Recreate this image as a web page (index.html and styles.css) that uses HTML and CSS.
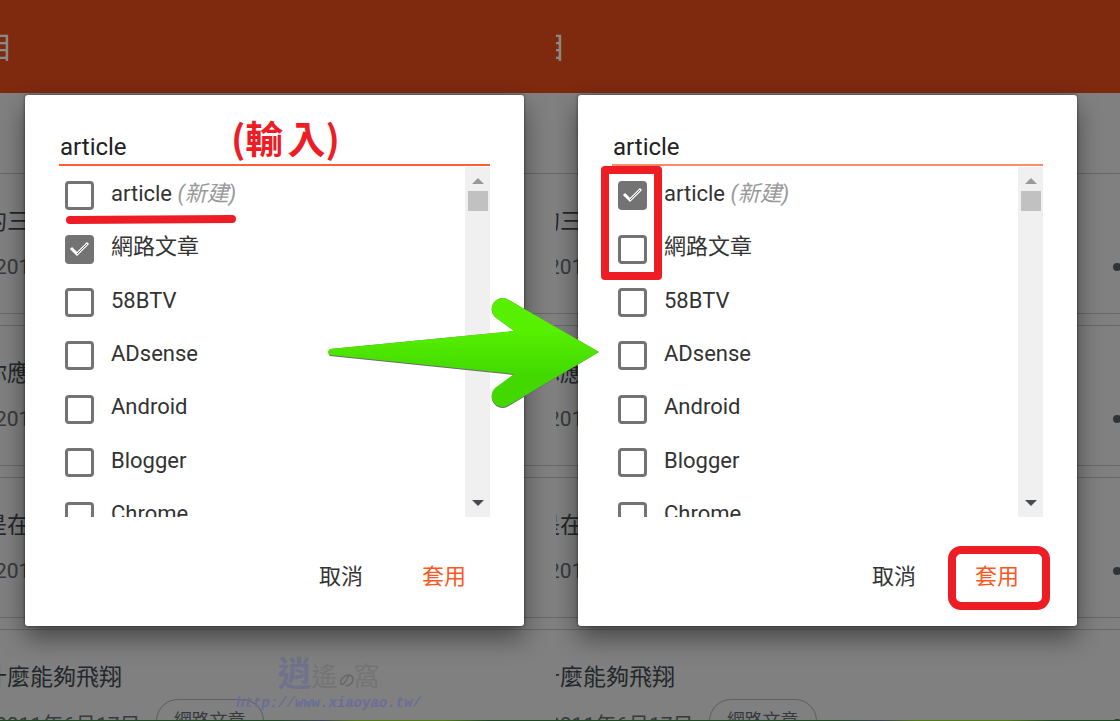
FILE: index.html
```html
<!DOCTYPE html>
<html lang="zh-Hant">
<head>
    <meta charset="UTF-8">
    <title>標籤</title>
    <link rel="stylesheet" href="styles.css">
</head>
<body>
<div class="board">
    <section class="pane">
        <div class="page">
            <header class="topbar">目</header>
            <ul class="posts">
                <li>
                    <h2>的三</h2>
                    <div class="meta"><span>201</span></div>
                </li>
                <li>
                    <h2>你應</h2>
                    <div class="meta"><span>201</span></div>
                </li>
                <li>
                    <h2>是在</h2>
                    <div class="meta"><span>201</span></div>
                </li>
                <li>
                    <h2>什麼能夠飛翔</h2>
                    <div class="meta"><span>2011年6月17日</span><span class="tag">網路文章</span></div>
                </li>
            </ul>
            <div class="watermark">
                <p><b>逍</b>遙<i>の</i>窩</p>
                <p class="url">http://www.xiaoyao.tw/</p>
            </div>
        </div>
        <form class="dialog">
            <input class="keyword" type="text" value="article" aria-label="標籤">
            <div class="list">
                <div class="rows">
                    <label><input type="checkbox"><span>article <em>(新建)</em></span></label>
                    <label><input type="checkbox" checked><span>網路文章</span></label>
                    <label><input type="checkbox"><span>58BTV</span></label>
                    <label><input type="checkbox"><span>ADsense</span></label>
                    <label><input type="checkbox"><span>Android</span></label>
                    <label><input type="checkbox"><span>Blogger</span></label>
                    <label><input type="checkbox"><span>Chrome</span></label>
                </div>
                <div class="bar"><i class="up"></i><i class="thumb"></i><i class="down"></i></div>
            </div>
            <div class="actions">
                <button type="button">取消</button>
                <button type="button" class="apply">套用</button>
            </div>
            <strong class="note">(輸<span>入</span>)</strong>
            <svg class="underline" viewBox="0 0 172 10"><path d="M5 6L167 5"/></svg>
        </form>
    </section>

    <section class="pane second">
        <div class="page">
            <header class="topbar">目</header>
            <ul class="posts">
                <li>
                    <h2>的三</h2>
                    <div class="meta"><span>201</span><svg class="more" viewBox="0 0 20 10"><circle cx="5" cy="5" r="4"/><circle cx="10" cy="5" r="4"/></svg></div>
                </li>
                <li>
                    <h2>你應</h2>
                    <div class="meta"><span>201</span><svg class="more" viewBox="0 0 20 10"><circle cx="5" cy="5" r="4"/><circle cx="10" cy="5" r="4"/></svg></div>
                </li>
                <li>
                    <h2>是在</h2>
                    <div class="meta"><span>201</span><svg class="more" viewBox="0 0 20 10"><circle cx="5" cy="5" r="4"/><circle cx="10" cy="5" r="4"/></svg></div>
                </li>
                <li>
                    <h2>什麼能夠飛翔</h2>
                    <div class="meta"><span>2011年6月17日</span><span class="tag">網路文章</span><svg class="more" viewBox="0 0 20 10"><circle cx="5" cy="5" r="4"/><circle cx="10" cy="5" r="4"/></svg></div>
                </li>
            </ul>
        </div>
        <form class="dialog">
            <input class="keyword" type="text" value="article" aria-label="標籤">
            <div class="list">
                <div class="rows">
                    <label><input type="checkbox" checked><span>article <em>(新建)</em></span></label>
                    <label><input type="checkbox"><span>網路文章</span></label>
                    <label><input type="checkbox"><span>58BTV</span></label>
                    <label><input type="checkbox"><span>ADsense</span></label>
                    <label><input type="checkbox"><span>Android</span></label>
                    <label><input type="checkbox"><span>Blogger</span></label>
                    <label><input type="checkbox"><span>Chrome</span></label>
                </div>
                <div class="bar"><i class="up"></i><i class="thumb"></i><i class="down"></i></div>
            </div>
            <div class="actions">
                <button type="button">取消</button>
                <button type="button" class="apply">套用</button>
            </div>
            <div class="mark mark-boxes"></div>
            <div class="mark mark-apply"></div>
        </form>
    </section>

    <svg class="arrow" viewBox="0 0 272 112">
        <defs>
            <linearGradient id="green" x1="0" y1="0" x2="0" y2="1">
                <stop offset="0.3" stop-color="#56f000"/>
                <stop offset="0.7" stop-color="#43d900"/>
            </linearGradient>
        </defs>
        <path class="shade" d="M2 52L186 34L167 20A11 11 0 0 1 179 2L271 55L179 110A11 11 0 0 1 167 92L186 78L2 59Q-1 56 2 52Z"/>
        <path fill="url(#green)" d="M2 52L186 34L167 20A11 11 0 0 1 179 2L271 55L179 109A11 11 0 0 1 167 91L186 77L2 58Q-2 55 2 52Z"/>
    </svg>
</div>
</body>
</html>
```
FILE: styles.css
```css
* {
    margin: 0;
    padding: 0;
    box-sizing: border-box;
}

body {
    font-family: Roboto, "Noto Sans CJK TC", sans-serif;
    font-size: 22px;
    background: #808080;
    overflow: hidden;
}

ul, li {
    list-style: none;
}

.board {
    position: relative;
    display: grid;
    grid-template-columns: 556fr 564fr;
    height: 100vh;
}

/* the page and the dialog share one grid cell */
.pane {
    display: grid;
    grid-template-columns: minmax(0, 1fr);
    grid-template-rows: 100vh;
    overflow: hidden;
}

.pane > * {
    grid-area: 1 / 1;
}

.second > .page {
    margin-left: -3px;
}

/* dimmed page */
.page {
    position: relative;
    overflow: hidden;
    color: #23282c;
}

.page::after {
    content: "";
    position: absolute;
    left: 0;
    right: 0;
    bottom: 0;
    height: 1px;
    background: linear-gradient(90deg, #1c4a20 0 50%, #3b4650 58%, #4f7a12 64% 80%, #1c4a20 88%);
}

.topbar {
    height: 93px;
    margin-bottom: 80px;
    background: #7f290f;
    color: #8a8a8a;
    font-size: 30px;
    line-height: 96px;
    text-indent: -17px;
}

.posts {
    display: grid;
    gap: 12px;
}

.posts li {
    height: 141px;
    padding-top: 28px;
    margin-bottom: -1px;
    border-top: 1px solid #66686a;
    border-bottom: 1px solid #66686a;
}

.posts h2 {
    font-size: 23px;
    font-weight: 400;
    line-height: 40px;
    text-indent: -16px;
    margin-bottom: 3px;
}

.meta {
    display: flex;
    align-items: center;
    height: 44px;
    margin-left: -5px;
    color: #363a3d;
    font-size: 21px;
}

.tag {
    height: 44px;
    margin: -4px 0 0 15px;
    padding: 0 17px;
    border: 1px solid #5c5e60;
    border-radius: 22px;
    font-size: 18px;
    line-height: 42px;
}

.more {
    width: 20px;
    height: 10px;
    margin-left: auto;
    margin-right: -12px;
    fill: #303437;
}

.watermark {
    position: absolute;
    left: 236px;
    top: 655px;
    text-align: center;
    color: #747474;
    font-size: 26px;
    line-height: 38px;
}

.watermark b {
    color: #70728c;
    font-size: 34px;
}

.watermark i {
    color: #666;
    font-size: 16px;
}

.watermark .url {
    margin-top: -6px;
    color: #686f96;
    font: italic bold 14px/18px "Liberation Mono", monospace;
}

/* dialog */
.dialog {
    position: relative;
    align-self: center;
    width: 499px;
    margin-left: 25px;
    padding: 34px 34px 0;
    border-radius: 3px;
    background: #fff;
    color: #333;
    box-shadow: 0 0 3px rgba(0, 0, 0, .6), 0 12px 26px rgba(0, 0, 0, .45);
}

.second .dialog {
    margin-left: 22px;
}

.keyword {
    display: block;
    width: 100%;
    height: 37px;
    margin-bottom: 1px;
    padding-left: 1px;
    border: 0;
    border-bottom: 2px solid #ff5f33;
    outline: 0;
    background: none;
    color: #222;
    font: 24px/35px Roboto, "Noto Sans CJK TC", sans-serif;
}

.second .keyword {
    border-color: #ff8a6a;
}

.list {
    display: flex;
    height: 350px;
    overflow: hidden;
}

.rows {
    flex: 1;
    display: grid;
    grid-auto-rows: 1fr;
    height: 376px;
    padding: 2px 0 0 6px;
}

.rows label {
    display: flex;
    align-items: center;
    gap: 17px;
}

.rows span {
    line-height: 28px;
    padding-bottom: 4px;
}

.rows em {
    color: #999;
}

.rows input {
    appearance: none;
    width: 29px;
    height: 29px;
    border: 3px solid #737373;
    border-radius: 4px;
    background: #fff;
}

.rows input:checked {
    background: #737373 url("data:image/svg+xml,%3Csvg xmlns='http://www.w3.org/2000/svg' viewBox='0 0 23 23' fill='none'%3E%3Cpath d='M3 10L9 16L20 5' stroke='%23fff' stroke-width='3'/%3E%3Cpath d='M9 16L19 6' stroke='%23737373' stroke-width='1'/%3E%3C/svg%3E") center / 23px no-repeat;
}

.bar {
    display: flex;
    flex-direction: column;
    align-items: center;
    width: 25px;
    padding: 11px 0;
    background: #f0f0f0;
}

.bar i {
    border: 6px solid transparent;
}

.bar .up {
    border-top: 0;
    border-bottom: 6px solid #999;
}

.bar .thumb {
    width: 20px;
    height: 20px;
    margin-top: 7px;
    border: 0;
    background: #c1c1c1;
}

.bar .down {
    margin-top: auto;
    border-bottom: 0;
    border-top: 6px solid #484c50;
}

.actions {
    display: flex;
    justify-content: flex-end;
    align-items: center;
    gap: 19px;
    height: 109px;
    padding-right: 4px;
}

.actions button {
    height: 44px;
    margin-top: 10px;
    padding: 0 20px;
    border: 0;
    background: none;
    color: #333;
    font: 22px/44px Roboto, "Noto Sans CJK TC", sans-serif;
}

.actions .apply {
    color: #ff5722;
}

/* hand-drawn marks over the dialogs */
.note {
    position: absolute;
    left: 206px;
    top: 17px;
    color: #ee1c25;
    font: bold 38px/50px "Noto Sans CJK TC", sans-serif;
}

.note span {
    margin-left: 4px;
}

.underline {
    position: absolute;
    left: 40px;
    top: 119px;
    width: 172px;
    height: 10px;
    stroke: #ee1c25;
    stroke-width: 8px;
    stroke-linecap: round;
}

.mark {
    position: absolute;
    border: 8px solid #ee1c25;
    pointer-events: none;
}

.mark-boxes {
    left: 23px;
    top: 71px;
    width: 61px;
    height: 114px;
    border-radius: 4px;
}

.mark-apply {
    left: 370px;
    top: 451px;
    width: 102px;
    height: 64px;
    border-radius: 13px;
}

.arrow {
    position: absolute;
    left: 328px;
    top: 297px;
    width: 272px;
    height: 112px;
    overflow: visible;
}

.arrow .shade {
    fill: #6b6b6b;
}
```
